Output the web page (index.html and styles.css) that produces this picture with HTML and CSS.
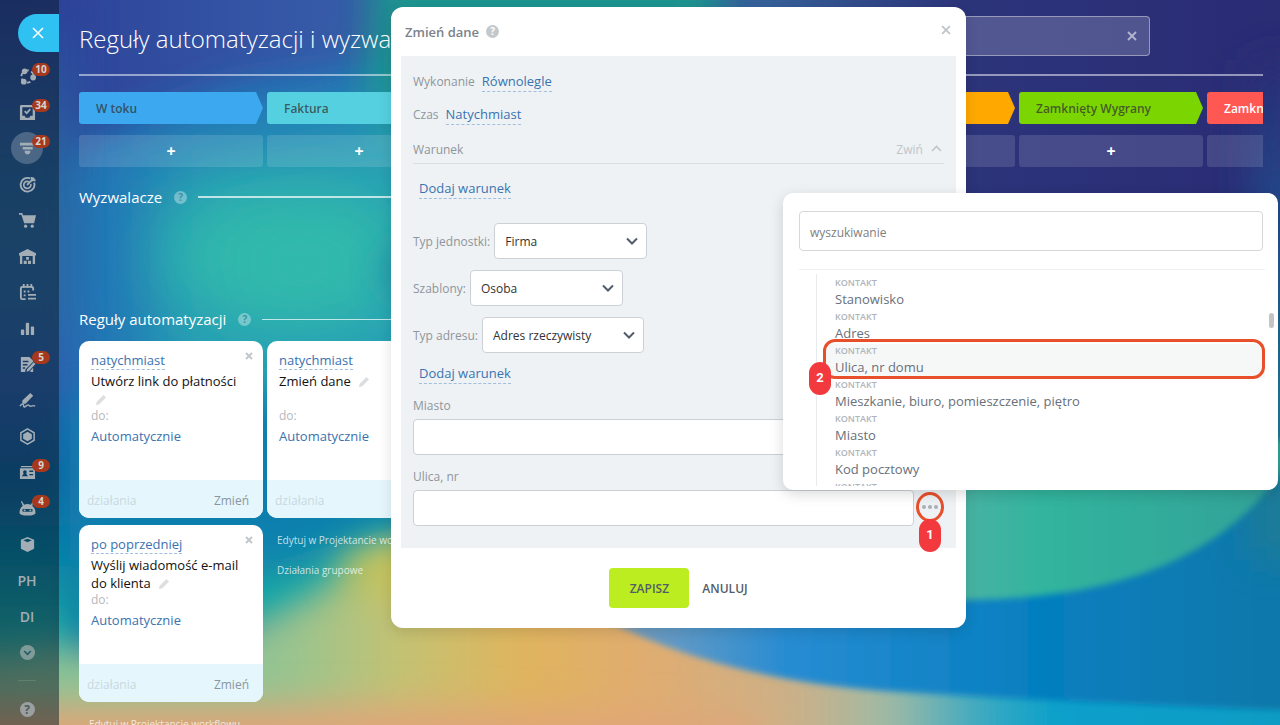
FILE: index.html
```
<!DOCTYPE html>
<html lang="pl">
<head>
  <meta charset="UTF-8">
  <title>Reguły automatyzacji i wyzwalacze</title>
  <link rel="stylesheet" href="styles.css">
</head>
<body>
  <!-- Wallpaper -->
  <svg class="wallpaper" viewBox="0 0 1280 725" preserveAspectRatio="none" aria-hidden="true">
    <defs>
      <linearGradient id="base" x1="0" y1="0" x2="1" y2="0">
        <stop offset="0" stop-color="#2c3f96"/>
        <stop offset="0.25" stop-color="#365aa8"/>
        <stop offset="0.6" stop-color="#366099"/>
        <stop offset="0.75" stop-color="#2c347a"/>
        <stop offset="1" stop-color="#2a2c74"/>
      </linearGradient>
      <linearGradient id="edge" x1="0" y1="0" x2="0" y2="1">
        <stop offset="0" stop-color="#2d3d98"/>
        <stop offset="0.25" stop-color="#2866a2"/>
        <stop offset="0.4" stop-color="#2b68a8"/>
        <stop offset="0.52" stop-color="#2a5fb0"/>
        <stop offset="0.62" stop-color="#0b5e9c"/>
        <stop offset="0.72" stop-color="#0485a8"/>
        <stop offset="0.82" stop-color="#18b0a8"/>
        <stop offset="0.9" stop-color="#8fbd92"/>
        <stop offset="1" stop-color="#d2a768"/>
      </linearGradient>
      <linearGradient id="land" gradientUnits="userSpaceOnUse" x1="60" y1="0" x2="1280" y2="0">
        <stop offset="0" stop-color="#8cc496"/>
        <stop offset="0.18" stop-color="#94c492"/>
        <stop offset="0.28" stop-color="#c4c272"/>
        <stop offset="0.38" stop-color="#e0b45e"/>
        <stop offset="0.48" stop-color="#e0ac70"/>
        <stop offset="0.6" stop-color="#ccb088"/>
        <stop offset="0.68" stop-color="#9fbaa5"/>
        <stop offset="0.75" stop-color="#3faac0"/>
        <stop offset="0.82" stop-color="#06a0cb"/>
        <stop offset="1" stop-color="#0a9cc4"/>
      </linearGradient>
      <linearGradient id="sea" x1="0" y1="0" x2="1" y2="0">
        <stop offset="0" stop-color="#8d9fae"/>
        <stop offset="0.14" stop-color="#5f99c6"/>
        <stop offset="0.28" stop-color="#288cd2"/>
        <stop offset="0.6" stop-color="#067fc0"/>
        <stop offset="1" stop-color="#0c76a4"/>
      </linearGradient>
      <linearGradient id="mint" x1="0" y1="0" x2="1" y2="0">
        <stop offset="0" stop-color="#4fb3a4"/>
        <stop offset="0.3" stop-color="#30b49e"/>
        <stop offset="1" stop-color="#33a097"/>
      </linearGradient>
      <linearGradient id="rim" x1="0" y1="0" x2="0" y2="1">
        <stop offset="0" stop-color="#2a2c74"/>
        <stop offset="0.3" stop-color="#234a8c"/>
        <stop offset="0.7" stop-color="#1a7c98"/>
        <stop offset="1" stop-color="#1a7c98"/>
      </linearGradient>
      <filter id="soft60" x="-50%" y="-50%" width="200%" height="200%"><feGaussianBlur stdDeviation="34"/></filter>
      <filter id="soft20" x="-50%" y="-50%" width="200%" height="200%"><feGaussianBlur stdDeviation="18"/></filter>
      <filter id="soft4" x="-50%" y="-50%" width="200%" height="200%"><feGaussianBlur stdDeviation="3"/></filter>
    </defs>
    <rect width="1280" height="725" fill="url(#base)"/>
    <path d="M-20 150 L60 150 L240 85 L420 60 V560 H-20Z" fill="#2274b6" filter="url(#soft20)"/>
    <path d="M375 -60 H720 V140 L400 220 L365 90Z" fill="#1d9490" filter="url(#soft20)"/>
    <path d="M150 160 L460 100 V480 L150 440Z" fill="#269fb4" filter="url(#soft60)"/>
    <ellipse cx="290" cy="255" rx="130" ry="60" fill="#30b9ac" filter="url(#soft60)"/>
    <ellipse cx="300" cy="265" rx="80" ry="45" fill="#30b9ac" filter="url(#soft60)"/>
    <ellipse cx="410" cy="270" rx="30" ry="26" fill="#2390a8" filter="url(#soft20)"/>
    <rect x="-80" y="-20" width="160" height="800" fill="url(#edge)" filter="url(#soft20)"/>
    <path d="M70 400 H420 V560 H70Z" fill="#087fae" filter="url(#soft20)"/>
    <path d="M80 560 H280 L420 520 V640 H80Z" fill="#0ea2a8" filter="url(#soft20)"/>
    <path d="M-60 680 L80 650 L200 650 L280 610 L400 545 L600 530 H1340 V800 H-60Z" fill="url(#land)" filter="url(#soft20)"/>
    <ellipse cx="400" cy="570" rx="60" ry="26" fill="#c8c35a" filter="url(#soft20)"/>
    <path d="M-60 705 H420 L760 720 V800 H-60Z" fill="#e0a678" filter="url(#soft20)"/>
    <path d="M570 600 Q700 680 900 692 T1340 712 V460 H900Z" fill="url(#sea)" filter="url(#soft4)"/>
    <path d="M1250 60 H1340 V560 H1250Z" fill="url(#rim)" filter="url(#soft20)"/>
    <path d="M940 440 H1300 Q1240 560 1080 590 Q1010 602 940 600Z" fill="url(#mint)" filter="url(#soft4)"/>
  </svg>

  <div class="layout">
    <nav class="sidebar" aria-label="Menu">
      <button class="panel-close" aria-label="Zamknij panel">
        <svg width="12" height="12" viewBox="0 0 12 12"><path d="M1 1l10 10M11 1L1 11" stroke="#fff" stroke-width="1.6"/></svg>
      </button>
      <a href="#" class="nav-item" aria-label="Współpraca">
        <svg viewBox="0 0 18 18"><circle cx="9" cy="9" r="6.5" fill="none" stroke="currentColor" stroke-width="2" stroke-dasharray="4 2.8"/><circle cx="6" cy="3.5" r="3"/><circle cx="15" cy="10" r="3"/><circle cx="5" cy="14.5" r="3"/></svg>
        <span class="badge">10</span>
      </a>
      <a href="#" class="nav-item" aria-label="Zadania">
        <svg viewBox="0 0 18 18"><path fill-rule="evenodd" d="M2.5 1h13A1.500 1.500 0 0 1 17 2.500V17H1V2.500A1.500 1.500 0 0 1 2.500 1zM3.500 3.500v9H6l1 2h4l1-2h2.500v-9z"/><path d="M6 7.500l2.200 2.200L12 5.500" fill="none" stroke="currentColor" stroke-width="1.800"/></svg>
        <span class="badge">34</span>
      </a>
      <a href="#" class="nav-item active" aria-label="CRM">
        <svg viewBox="0 0 18 18"><path d="M1 3h16v2.800H1zM4 7.500h10.500v2.500H4zM6 11.500h6V13l-1.500 2h-3L6 13z"/></svg>
        <span class="badge">21</span>
      </a>
      <a href="#" class="nav-item" aria-label="Marketing">
        <svg viewBox="0 0 18 18" fill="none" stroke="currentColor"><path d="M12 2.600A7.300 7.300 0 1 0 16 7" stroke-width="2"/><path d="M10.500 6A3.800 3.800 0 1 0 12.500 8.500" stroke-width="1.800"/><path d="M8.500 9.500L16 2M13.500 1v3.500H17.500" stroke-width="2"/></svg>
      </a>
      <a href="#" class="nav-item" aria-label="Sklep">
        <svg viewBox="0 0 18 18"><path d="M0 1h3.500l.8 2.500H18L16 12H5.500L2.500 2.800H0z"/><circle cx="7" cy="15" r="1.700"/><circle cx="14" cy="15" r="1.700"/></svg>
      </a>
      <a href="#" class="nav-item" aria-label="Magazyn">
        <svg viewBox="0 0 18 18"><path fill-rule="evenodd" d="M9 1l9 4.500V8h-1v9h-2.500V8.500h-11V17H1V8H0V5.500z"/><path d="M7.500 9.500h3v3h-3zM5 13.500h3.200V17H5zM9.500 13.500h3.200V17H9.500z"/></svg>
      </a>
      <a href="#" class="nav-item" aria-label="Rezerwacje">
        <svg viewBox="0 0 18 18"><path d="M7 16H3.500A1.500 1.500 0 0 1 2 14.500V4.500A1.500 1.500 0 0 1 3.500 3h10A1.500 1.500 0 0 1 15 4.500V7" fill="none" stroke="currentColor" stroke-width="2"/><path d="M4 0h2v4H4zM8 0h2v4H8zM12 0h2v4h-2zM5 7h2v2H5zM9 7h2v2H9zM5 11h2v2H5zM9.500 10.500H18v2H9.500zM9.500 14.500H18v2H9.500z"/></svg>
      </a>
      <a href="#" class="nav-item" aria-label="Analityka">
        <svg viewBox="0 0 18 18"><rect x="2" y="10" width="3.500" height="6" rx="1"/><rect x="7.200" y="3" width="3.500" height="13" rx="1"/><rect x="12.500" y="7" width="3.500" height="9" rx="1"/></svg>
      </a>
      <a href="#" class="nav-item" aria-label="Dokumenty">
        <svg viewBox="0 0 18 18"><path fill-rule="evenodd" d="M2 1h9l4 4v1L7 14l-.5 3H2zM4 5v1.500h6V5zM4 8.500V10h5V8.500zM4 12v1.500h2.500V12z"/><path d="M15.500 6.500l2 2-7 7.500-2.500.8.600-2.800zM12 17v-1.500l3-3V17z"/></svg>
        <span class="badge">5</span>
      </a>
      <a href="#" class="nav-item" aria-label="Podpis">
        <svg viewBox="0 0 18 18"><path d="M12 1l3 3-8 8.500H3.500V9z"/><path d="M1 15c3-4 4-2 4 0s2 0 4-1 1.500 2 4 1 3-1 4 0" fill="none" stroke="currentColor" stroke-width="1.500"/></svg>
      </a>
      <a href="#" class="nav-item" aria-label="Automatyzacja">
        <svg viewBox="0 0 18 18"><path d="M9 1l7 4v8l-7 4-7-4V5z" fill="none" stroke="currentColor" stroke-width="1.600"/><path d="M9 4l4.600 2.500v5L9 14l-4.600-2.500v-5z"/></svg>
      </a>
      <a href="#" class="nav-item" aria-label="Kadry">
        <svg viewBox="0 0 18 18"><path fill-rule="evenodd" d="M2 2h14v1.500H2zM1 4.500h16V16H1zM11 7v1.500h4V7zM11 10.500V12h4v-1.500zM6 6.500a2 2 0 0 0-1 3.500l-2 3h6.500l-2-3A2 2 0 0 0 6 6.500z"/></svg>
        <span class="badge">9</span>
      </a>
      <a href="#" class="nav-item" aria-label="RPA">
        <svg viewBox="0 0 18 18"><path fill-rule="evenodd" d="M3 1l2.500 4a8 8 0 0 1 7 0L15 1l1 .5-2 4.500q3.500 2.500 3.500 7.500 0 3-8.500 3T.5 13.500Q.5 8.500 4 6L2 1.500zM5 9.500Q3.500 9.500 3.500 11T5 12.500h8q1.500 0 1.500-1.500T13 9.500z"/><circle cx="6" cy="11" r="1"/><circle cx="12" cy="11" r="1"/></svg>
        <span class="badge">4</span>
      </a>
      <a href="#" class="nav-item" aria-label="Aplikacje">
        <svg viewBox="0 0 18 18"><path fill-rule="evenodd" d="M9 1l7 3v9.500L9 17l-7-3.500V4zM4.500 4.500L9 6.500l4.500-2L9 2.800z"/></svg>
      </a>
      <a href="#" class="nav-item text">PH</a>
      <a href="#" class="nav-item text">DI</a>
      <a href="#" class="nav-item dim" aria-label="Więcej">
        <svg viewBox="0 0 18 18"><circle cx="9" cy="9" r="8"/><path d="M5.500 7.500L9 11l3.500-3.500" fill="none" stroke="#1e5c62" stroke-width="1.600"/></svg>
      </a>
      <hr>
      <a href="#" class="nav-item" aria-label="Pomoc"><span class="nav-help">?</span></a>
    </nav>

    <main class="content">
      <header class="page-header">
        <h1>Reguły automatyzacji i wyzwalacze</h1>
        <div class="search">
          <button aria-label="Wyczyść">
            <svg width="10" height="10" viewBox="0 0 10 10"><path d="M1 1l8 8M9 1L1 9" stroke="currentColor" stroke-width="1.800"/></svg>
          </button>
        </div>
      </header>

      <div class="columns stages">
        <div class="stage blue">W toku</div>
        <div class="stage cyan">Faktura</div>
        <div class="stage cyan"></div>
        <div class="stage orange"></div>
        <div class="stage orange"></div>
        <div class="stage green">Zamknięty Wygrany</div>
        <div class="stage red">Zamknięty Przegrany</div>
      </div>
      <div class="columns adders">
        <button class="add" aria-label="Dodaj">+</button>
        <button class="add" aria-label="Dodaj">+</button>
        <button class="add" aria-label="Dodaj">+</button>
        <button class="add" aria-label="Dodaj">+</button>
        <button class="add" aria-label="Dodaj"></button>
        <button class="add" aria-label="Dodaj">+</button>
        <button class="add" aria-label="Dodaj"></button>
      </div>

      <h2 class="section-title triggers">Wyzwalacze <span class="help">?</span></h2>
      <h2 class="section-title">Reguły automatyzacji <span class="help">?</span></h2>

      <div class="columns rules">
        <div class="column">
          <article class="rule">
            <div class="rule-body">
              <a href="#" class="dashed">natychmiast</a>
              <h3>Utwórz link do płatności <svg class="pencil" viewBox="0 0 12 12"><path d="M8.500 1l2.500 2.500-7 7L1 11l.5-3z"/></svg></h3>
              <small>do:</small>
              <a href="#">Automatycznie</a>
              <button class="rule-close" aria-label="Usuń"><svg width="8" height="8" viewBox="0 0 8 8"><path d="M1 1l6 6M7 1L1 7" stroke="currentColor" stroke-width="2"/></svg></button>
            </div>
            <footer><span>działania</span><a href="#">Zmień</a></footer>
          </article>
          <article class="rule">
            <div class="rule-body">
              <a href="#" class="dashed">po poprzedniej</a>
              <h3>Wyślij wiadomość e-mail do klienta <svg class="pencil" viewBox="0 0 12 12"><path d="M8.500 1l2.500 2.500-7 7L1 11l.5-3z"/></svg></h3>
              <small>do:</small>
              <a href="#">Automatycznie</a>
              <button class="rule-close" aria-label="Usuń"><svg width="8" height="8" viewBox="0 0 8 8"><path d="M1 1l6 6M7 1L1 7" stroke="currentColor" stroke-width="2"/></svg></button>
            </div>
            <footer><span>działania</span><a href="#">Zmień</a></footer>
          </article>
          <div class="column-links">
            <a href="#">Edytuj w Projektancie workflowu</a>
          </div>
        </div>
        <div class="column">
          <article class="rule">
            <div class="rule-body">
              <a href="#" class="dashed">natychmiast</a>
              <h3>Zmień dane <svg class="pencil" viewBox="0 0 12 12"><path d="M8.500 1l2.500 2.500-7 7L1 11l.5-3z"/></svg></h3>
              <small>do:</small>
              <a href="#">Automatycznie</a>
            </div>
            <footer><span>działania</span></footer>
          </article>
          <div class="column-links">
            <a href="#">Edytuj w Projektancie workflowu</a>
            <a href="#">Działania grupowe</a>
          </div>
        </div>
      </div>
    </main>
  </div>

  <!-- Rule settings dialog -->
  <form class="dialog" role="dialog" aria-labelledby="dialogTitle">
    <header class="dialog-header">
      <h2 id="dialogTitle">Zmień dane</h2>
      <span class="help grey">?</span>
      <button type="button" aria-label="Zamknij"><svg width="10" height="10" viewBox="0 0 9 9"><path d="M1 1l7 7M8 1L1 8" stroke="currentColor" stroke-width="1.800"/></svg></button>
    </header>
    <div class="dialog-panel">
      <div class="line">Wykonanie <a href="#" class="dashed">Równolegle</a></div>
      <div class="line">Czas <a href="#" class="dashed">Natychmiast</a></div>
      <div class="condition-head">
        <span>Warunek</span>
        <button type="button">Zwiń <svg width="11" height="7" viewBox="0 0 11 7"><path d="M1 6l4.500-4.500L10 6" fill="none" stroke="currentColor" stroke-width="1.600"/></svg></button>
      </div>
      <div class="add-condition"><a href="#" class="dashed">Dodaj warunek</a></div>
      <div class="selects">
        <div class="select-row">
          <label for="entity">Typ jednostki:</label>
          <span class="select"><select id="entity"><option>Firma</option></select><svg viewBox="0 0 12 8"><path d="M1 1.500l5 5 5-5"/></svg></span>
        </div>
        <div class="select-row">
          <label for="template">Szablony:</label>
          <span class="select"><select id="template"><option>Osoba</option></select><svg viewBox="0 0 12 8"><path d="M1 1.500l5 5 5-5"/></svg></span>
        </div>
        <div class="select-row">
          <label for="address">Typ adresu:</label>
          <span class="select wide"><select id="address"><option>Adres rzeczywisty</option></select><svg viewBox="0 0 12 8"><path d="M1 1.500l5 5 5-5"/></svg></span>
        </div>
      </div>
      <div class="add-condition second"><a href="#" class="dashed">Dodaj warunek</a></div>
      <div class="field">
        <label for="city">Miasto</label>
        <div class="field-row"><input type="text" id="city"><button type="button" class="more" aria-label="Wstaw wartość"><i></i><i></i><i></i></button></div>
      </div>
      <div class="field">
        <label for="street">Ulica, nr</label>
        <div class="field-row">
          <input type="text" id="street">
          <button type="button" class="more marked" aria-label="Wstaw wartość"><i></i><i></i><i></i><span class="step">1</span></button>
        </div>
      </div>
    </div>
    <div class="dialog-buttons">
      <button type="button" class="save">ZAPISZ</button>
      <button type="button" class="cancel">ANULUJ</button>
    </div>
  </form>

  <!-- Field picker -->
  <div class="picker">
    <input type="text" placeholder="wyszukiwanie" aria-label="wyszukiwanie">
    <div class="picker-list">
      <a href="#"><small>KONTAKT</small>Stanowisko</a>
      <a href="#"><small>KONTAKT</small>Adres</a>
      <a href="#" class="hover"><small>KONTAKT</small>Ulica, nr domu<span class="step">2</span></a>
      <a href="#"><small>KONTAKT</small>Mieszkanie, biuro, pomieszczenie, piętro</a>
      <a href="#"><small>KONTAKT</small>Miasto</a>
      <a href="#"><small>KONTAKT</small>Kod pocztowy</a>
      <a href="#"><small>KONTAKT</small></a>
    </div>
    <span class="thumb"></span>
  </div>
</body>
</html>
```
FILE: styles.css
```
* {
  box-sizing: border-box;
}

body {
  margin: 0;
  height: 100vh;
  overflow: hidden;
  position: relative;
  font-family: "Open Sans", "Noto Sans", sans-serif;
  font-size: 13px;
  color: #333;
}

h1, h2, h3 {
  margin: 0;
  font-weight: 400;
}

a {
  color: #3a72b0;
  text-decoration: none;
}

button {
  font-family: inherit;
  border: none;
  background: none;
  padding: 0;
  cursor: pointer;
}

.wallpaper {
  position: absolute;
  top: 0;
  left: 0;
  width: 100%;
  height: 100%;
}

.layout {
  position: relative;
  display: grid;
  grid-template-columns: 59px 1fr;
  height: 100%;
}

/* Sidebar */
.sidebar {
  display: flex;
  flex-direction: column;
  padding-top: 14px;
  min-height: 0;
  background: rgba(10, 25, 40, 0.5);
}

.sidebar hr {
  flex: none;
  width: 18px;
  margin: 10px 0 10px 18px;
  border: none;
  border-top: 1px solid rgba(255, 255, 255, 0.12);
}

.panel-close {
  align-self: flex-end;
  flex: none;
  width: 41px;
  height: 38px;
  margin-bottom: 6px;
  padding: 2px 2px 0 0;
  background: #2fc1f2;
  border-radius: 19px 0 0 19px;
}

.nav-item {
  position: relative;
  flex: none;
  display: flex;
  align-items: center;
  justify-content: center;
  width: 32px;
  height: 32px;
  margin: 2px 0 2px 11px;
  border-radius: 50%;
  color: #a3adb5;
}

.nav-item svg {
  width: 17px;
  height: 17px;
  fill: currentColor;
}

.nav-item svg[fill="none"] {
  fill: none;
}

.nav-item.active {
  background: rgba(255, 255, 255, 0.22);
}

.nav-item.text {
  font-size: 14px;
  font-weight: 600;
}

.nav-item.dim {
  color: #7f9a98;
}

.badge {
  position: absolute;
  top: 3px;
  left: 21px;
  min-width: 18px;
  height: 13px;
  padding: 0 3px;
  border-radius: 7px;
  background: #a8381c;
  color: #d5d5d5;
  font-size: 10px;
  font-weight: 700;
  line-height: 13px;
  text-align: center;
}

.nav-help {
  width: 15px;
  height: 15px;
  border-radius: 50%;
  background: #9aa0a0;
  color: #4e5a5a;
  font-size: 12px;
  font-weight: 700;
  line-height: 15px;
  text-align: center;
}

/* Page */
.content {
  min-width: 0;
  overflow: hidden;
  padding: 0 17px 0 20px;
}

.page-header {
  display: flex;
  align-items: flex-start;
  justify-content: space-between;
  height: 76px;
  padding: 16px 113px 0 0;
  border-bottom: 2px solid rgba(255, 255, 255, 0.5);
}

.page-header h1 {
  color: #fff;
  font-size: 24px;
  font-weight: 300;
  line-height: 46px;
  white-space: nowrap;
}

.search {
  display: flex;
  align-items: center;
  justify-content: flex-end;
  width: 400px;
  height: 40px;
  padding-right: 12px;
  border: 1px solid rgba(255, 255, 255, 0.4);
  border-radius: 4px;
  background: rgba(255, 255, 255, 0.18);
}

.search button {
  color: #b3b5d0;
}

.columns {
  display: grid;
  grid-auto-flow: column;
  grid-auto-columns: 184px;
  justify-content: start;
  gap: 4px;
  overflow: hidden;
}

.stages {
  margin-top: 16px;
}

.stage {
  height: 32px;
  padding-left: 17px;
  border-radius: 3px;
  clip-path: polygon(0 0, 177px 0, 184px 50%, 177px 100%, 0 100%);
  color: rgba(51, 51, 51, 0.75);
  font-size: 12px;
  font-weight: 600;
  line-height: 34px;
  white-space: nowrap;
}

.blue { background: #3ba8ef; }
.cyan { background: #55d0e0; }
.orange { background: #ffa900; }
.green { background: #7bd500; }
.red { background: #ff5752; color: #fff; }

.adders {
  margin-top: 11px;
}

.add {
  height: 32px;
  border-radius: 3px;
  background: rgba(255, 255, 255, 0.13);
  color: #fff;
  font-size: 16px;
  font-weight: 700;
  line-height: 30px;
}

.section-title {
  display: flex;
  align-items: center;
  height: 24px;
  margin-top: 18px;
  color: #fff;
  font-size: 15px;
  white-space: nowrap;
}

.section-title::after {
  content: "";
  flex: 1;
  height: 1px;
  background: rgba(255, 255, 255, 0.7);
}

.section-title.triggers::after {
  height: 2px;
}

.section-title.triggers {
  margin-bottom: 98px;
}

.help {
  width: 13px;
  height: 13px;
  margin: 0 11px 0 12px;
  border-radius: 50%;
  background: rgba(255, 255, 255, 0.35);
  color: #3d93a5;
  font-size: 10px;
  font-weight: 700;
  line-height: 13px;
  text-align: center;
}

.help.grey {
  margin: 0 7px;
  background: #c3c8cc;
  color: #fff;
}

/* Rules */
.rules {
  margin-top: 10px;
}

.column {
  display: flex;
  flex-direction: column;
  gap: 7px;
}

.rule {
  height: 177px;
  display: flex;
  flex-direction: column;
  border-radius: 10px;
  overflow: hidden;
  background: #fff;
}

.rule-body {
  position: relative;
  flex: 1;
  display: flex;
  flex-direction: column;
  align-items: flex-start;
  padding: 10px 12px 0;
  line-height: 18px;
}

.rule-body h3 {
  min-height: 36px;
  margin-top: 2px;
  color: #111;
  font-size: 13px;
}

.rule-body small {
  margin-bottom: 3px;
  color: #b4b9be;
  font-size: 12px;
  line-height: 16px;
}

.dashed {
  border-bottom: 1px dashed #9fbfdd;
}

.pencil {
  width: 12px;
  height: 12px;
  margin-left: 4px;
  vertical-align: -2px;
  fill: #dcdfe1;
}

.rule-close {
  position: absolute;
  top: 6px;
  right: 10px;
  color: #c3c7cb;
  line-height: 16px;
}

.rule footer {
  display: flex;
  align-items: center;
  justify-content: space-between;
  height: 38px;
  padding: 2px 14px 0 8px;
  background: #e5f7fd;
  color: #c9d7de;
  font-size: 12px;
}

.rule footer a {
  color: #89969f;
}

.column-links {
  display: flex;
  flex-direction: column;
  gap: 14px;
  padding: 7px 10px;
  font-size: 10px;
  line-height: 16px;
  white-space: nowrap;
}

.column-links a {
  color: rgba(255, 255, 255, 0.75);
}

/* Dialog */
.dialog {
  position: absolute;
  top: 7px;
  left: 391px;
  width: 575px;
  padding: 0 10px 20px;
  border-radius: 12px;
  background: #fff;
  color: #8f959c;
  font-size: 12px;
  box-shadow: 0 4px 14px rgba(0, 0, 0, 0.12);
}

.dialog-header {
  display: flex;
  align-items: center;
  height: 49px;
  padding: 0 5px 0 4px;
}

.dialog-header h2 {
  color: #7c828b;
  font-size: 13px;
  font-weight: 600;
}

.dialog-header button {
  margin-left: auto;
  padding-bottom: 4px;
  color: #c2c6ca;
}

.dialog-panel {
  padding: 9px 12px 22px;
  background: #eef2f4;
}

.line {
  display: flex;
  align-items: center;
  gap: 7px;
  height: 33px;
}

.line a, .add-condition a {
  font-size: 13px;
  line-height: 20px;
}

.condition-head {
  display: flex;
  align-items: center;
  justify-content: space-between;
  height: 29px;
  margin-top: 4px;
  padding-right: 2px;
  border-bottom: 1px solid #d9dde0;
}

.condition-head button {
  color: #c0c5ca;
  font-size: 12px;
}

.condition-head svg {
  margin: 0 0 2px 5px;
}

.add-condition {
  height: 21px;
  margin-top: 14px;
  padding-left: 6px;
}

.add-condition a {
  display: inline-block;
}

.selects {
  display: flex;
  flex-direction: column;
  gap: 11px;
  margin-top: 24px;
}

.select-row {
  display: flex;
  align-items: center;
  gap: 4px;
}

.select {
  position: relative;
  width: 153px;
}

.select.wide {
  width: 162px;
}

.select select {
  display: block;
  width: 100%;
  height: 36px;
  padding: 0 10px;
  border: 1px solid #cbd1d7;
  border-radius: 4px;
  background: #fff;
  color: #333;
  font-family: inherit;
  font-size: 12px;
  appearance: none;
}

.select svg {
  position: absolute;
  top: 14px;
  right: 9px;
  width: 12px;
  height: 8px;
  fill: none;
  stroke: #525c69;
  stroke-width: 2;
  pointer-events: none;
}

.add-condition.second {
  margin-top: 10px;
}

.field {
  margin-top: 11px;
}

.field label {
  display: block;
  margin-bottom: 2px;
  line-height: 22px;
}

.field-row {
  display: flex;
  gap: 2px;
}

.field-row input {
  flex: 1;
  min-width: 0;
  height: 36px;
  border: 1px solid #cbd1d7;
  border-radius: 4px;
  background: #fff;
}

.more {
  position: relative;
  display: flex;
  align-items: center;
  justify-content: center;
  gap: 2px;
  width: 28px;
  height: 30px;
  margin-top: 2px;
}

.more i {
  width: 4px;
  height: 4px;
  border-radius: 50%;
  background: #a9afb5;
}

.more.marked {
  border: 3px solid #e8502b;
  border-radius: 50%;
}

.step {
  position: absolute;
  width: 22px;
  height: 33px;
  border-radius: 11px;
  background: #f23a3e;
  color: #fff;
  font-family: Roboto, sans-serif;
  font-size: 13px;
  font-weight: 700;
  line-height: 31px;
  text-align: center;
}

.more .step {
  top: 24px;
  left: 0;
}

.dialog-buttons {
  display: flex;
  justify-content: center;
  gap: 13px;
  margin-top: 20px;
}

.dialog-buttons button {
  height: 40px;
  border-radius: 4px;
  color: #535c69;
  font-size: 12px;
  font-weight: 600;
}

.dialog-buttons .save {
  width: 80px;
  background: #bbed21;
}

/* Field picker */
.picker {
  position: absolute;
  top: 193px;
  right: 2px;
  width: 495px;
  height: 297px;
  padding: 18px 15px 0 16px;
  border-radius: 10px;
  background: #fff;
  box-shadow: 0 4px 14px rgba(0, 0, 0, 0.15);
}

.picker input {
  display: block;
  width: 100%;
  height: 40px;
  padding: 2px 10px 0;
  border: 1px solid #d5d8db;
  border-radius: 4px;
  font-family: inherit;
  font-size: 12px;
}

.picker input::placeholder {
  color: #808080;
}

.picker-list {
  position: relative;
  height: 217px;
  margin: 18px -2px 0 0;
  padding: 6px 0 0 27px;
  border-top: 1px solid #eef0f1;
  overflow: hidden;
}

.picker-list::before {
  content: "";
  position: absolute;
  top: 4px;
  bottom: 0;
  left: 17px;
  width: 1px;
  background: #e8ebed;
}

.picker-list a {
  position: relative;
  display: block;
  height: 34px;
  padding-left: 9px;
  color: #68707a;
  line-height: 18px;
}

.picker-list small {
  display: block;
  color: #b0b5ba;
  font-size: 9px;
  font-weight: 600;
  line-height: 14px;
}

.picker-list a.hover {
  background: #f6f8f8;
}

.picker-list a.hover::after {
  content: "";
  position: absolute;
  inset: -5px 0 -1px -3px;
  border: 3px solid #e8502b;
  border-radius: 12px;
}

.picker-list .step {
  top: 18px;
  left: -17px;
  z-index: 1;
}

.thumb {
  position: absolute;
  top: 120px;
  right: 4px;
  width: 5px;
  height: 15px;
  border-radius: 3px;
  background: #c4c4c4;
}
```
